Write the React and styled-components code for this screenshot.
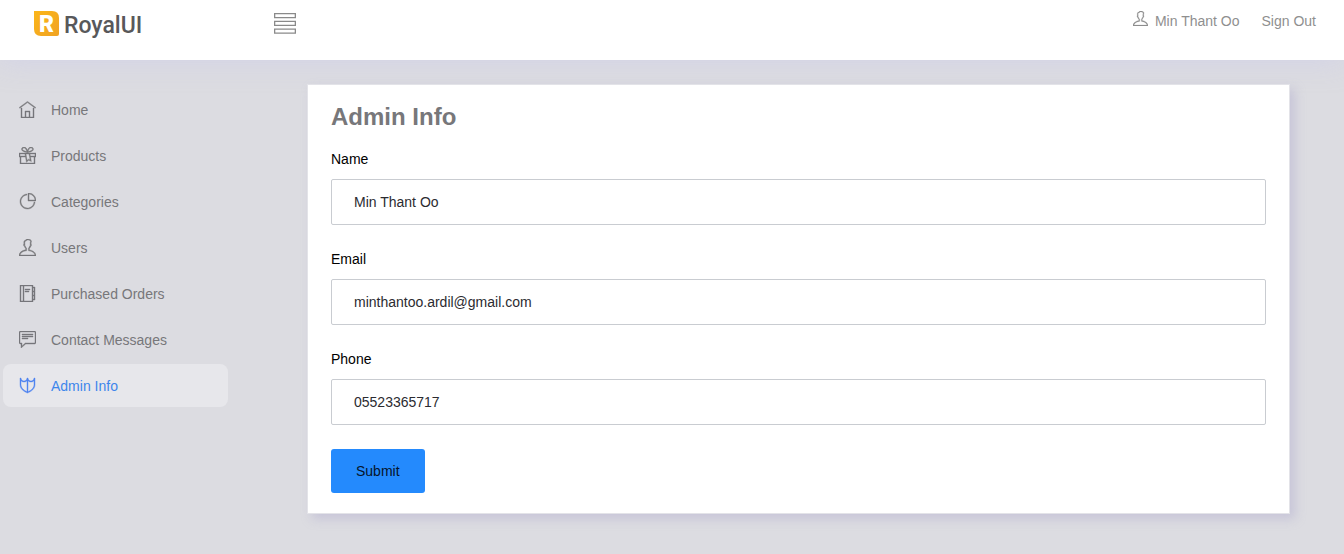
import React from "react";
import styled, { createGlobalStyle } from "styled-components";
import {
  TfiHome,
  TfiGift,
  TfiPieChart,
  TfiUser,
  TfiAgenda,
  TfiCommentAlt,
  TfiShield,
  TfiViewList,
} from "react-icons/tfi";

const GlobalStyle = createGlobalStyle`
  *, *::before, *::after { box-sizing: border-box; }
  body {
    margin: 0;
    background: #dcdce1;
    font-family: "Liberation Sans", Arial, sans-serif;
    font-size: 14px;
    line-height: 20px;
    color: #000;
  }
`;

const Page = styled.div`
  min-height: 100vh;
  display: flex;
  flex-direction: column;
`;

const TopBar = styled.header`
  display: flex;
  align-items: flex-start;
  height: 60px;
  padding: 0 28px 0 34px;
  background: #fff;
  box-shadow: 0 0 28px rgba(200, 200, 240, 0.5);
`;

const Brand = styled.a`
  display: flex;
  align-items: flex-start;
  gap: 5px;
  width: 240px;
  padding-top: 10px;
  color: #58585a;
  text-decoration: none;
  font: 500 23px/32px Roboto, sans-serif;
`;

const MenuButton = styled.button`
  display: flex;
  margin-top: 13px;
  padding: 0;
  border: 0;
  background: none;
  color: #8a8a8a;
  font-size: 22px;
`;

const UserNav = styled.nav`
  display: flex;
  gap: 22px;
  margin-left: auto;
  padding-top: 11px;
`;

const UserLink = styled.a`
  display: flex;
  gap: 7px;
  color: #8f8f8f;
  text-decoration: none;

  svg {
    font-size: 15px;
    stroke-width: 0.3;
  }
`;

const Body = styled.div`
  flex: 1;
  display: grid;
  grid-template-columns: 235px minmax(0, 1fr);
`;

const Sidebar = styled.nav`
  padding: 28px 7px 28px 3px;
`;

const MenuList = styled.ul`
  display: flex;
  flex-direction: column;
  gap: 3px;
  margin: 0;
  padding: 0;
  list-style: none;
`;

const MenuLink = styled.a`
  display: flex;
  align-items: center;
  gap: 15px;
  height: 43px;
  padding: 0 16px;
  border-radius: 8px;
  text-decoration: none;
  color: ${(p) => (p.$active ? "#3d86ec" : "#77777a")};
  background: ${(p) => (p.$active ? "#e7e7eb" : "transparent")};

  svg {
    font-size: 17px;
    stroke-width: 0.4;
    color: ${(p) => (p.$active ? "#4f83f0" : "#77777a")};
  }
`;

const Main = styled.main`
  padding: 24px 54px 40px 72px;
`;

const Card = styled.section`
  padding: 16px 23px 20px;
  border: 1px solid #e3e3e8;
  background: #fff;
  box-shadow: 5px 5px 10px rgba(160, 155, 200, 0.35);
`;

const Title = styled.h1`
  margin: 0 0 16px;
  font-size: 24px;
  line-height: 32px;
  font-weight: 700;
  color: #77777a;
`;

const Form = styled.form`
  display: flex;
  flex-direction: column;
  align-items: flex-start;
  gap: 24px;
`;

const Field = styled.div`
  display: flex;
  flex-direction: column;
  gap: 10px;
  width: 100%;
`;

const Input = styled.input`
  width: 100%;
  height: 46px;
  padding: 0 22px;
  border: 1px solid #c9ccd1;
  border-radius: 2px;
  background: #fff;
  color: #2b2b30;
  font: inherit;
`;

const SubmitButton = styled.button`
  height: 44px;
  padding: 0 25px;
  border: 0;
  border-radius: 3px;
  background: #248afd;
  color: #06142a;
  font: inherit;
`;

const LogoMark = () => (
  <svg width="25" height="30" viewBox="0 0 25 30" aria-hidden="true">
    <defs>
      <linearGradient id="gold" x1="0" y1="0" x2="1" y2="1">
        <stop offset="0" stopColor="#fbb519" />
        <stop offset="1" stopColor="#f0a323" />
      </linearGradient>
    </defs>
    <path
      d="M0 1H18Q25 1 25 8V24Q25 26 23 26H7Q0 26 0 19Z"
      fill="url(#gold)"
    />
    <text
      x="12.500"
      y="22"
      textAnchor="middle"
      fill="#fff"
      fontFamily="Roboto, sans-serif"
      fontSize="23"
      fontWeight="900"
    >
      R
    </text>
  </svg>
);

const menu = [
  { label: "Home", Icon: TfiHome },
  { label: "Products", Icon: TfiGift },
  { label: "Categories", Icon: TfiPieChart },
  { label: "Users", Icon: TfiUser },
  { label: "Purchased Orders", Icon: TfiAgenda },
  { label: "Contact Messages", Icon: TfiCommentAlt },
  { label: "Admin Info", Icon: TfiShield, active: true },
];

const fields = [
  { id: "name", label: "Name", type: "text", value: "Min Thant Oo" },
  { id: "email", label: "Email", type: "email", value: "minthantoo.ardil@gmail.com" },
  { id: "phone", label: "Phone", type: "tel", value: "05523365717" },
];

export default function App() {
  return (
    <Page>
      <GlobalStyle />
      <TopBar>
        <Brand href="#">
          <LogoMark />
          RoyalUI
        </Brand>
        <MenuButton type="button" aria-label="Toggle menu">
          <TfiViewList />
        </MenuButton>
        <UserNav aria-label="Account">
          <UserLink href="#">
            <TfiUser />
            Min Thant Oo
          </UserLink>
          <UserLink href="#">Sign Out</UserLink>
        </UserNav>
      </TopBar>
      <Body>
        <Sidebar aria-label="Main">
          <MenuList>
            {menu.map(({ label, Icon, active }) => (
              <li key={label}>
                <MenuLink href="#" $active={active} aria-current={active ? "page" : undefined}>
                  <Icon />
                  {label}
                </MenuLink>
              </li>
            ))}
          </MenuList>
        </Sidebar>
        <Main>
          <Card>
            <Title>Admin Info</Title>
            <Form onSubmit={(e) => e.preventDefault()}>
              {fields.map((f) => (
                <Field key={f.id}>
                  <label htmlFor={f.id}>{f.label}</label>
                  <Input id={f.id} type={f.type} defaultValue={f.value} />
                </Field>
              ))}
              <SubmitButton type="submit">Submit</SubmitButton>
            </Form>
          </Card>
        </Main>
      </Body>
    </Page>
  );
}
